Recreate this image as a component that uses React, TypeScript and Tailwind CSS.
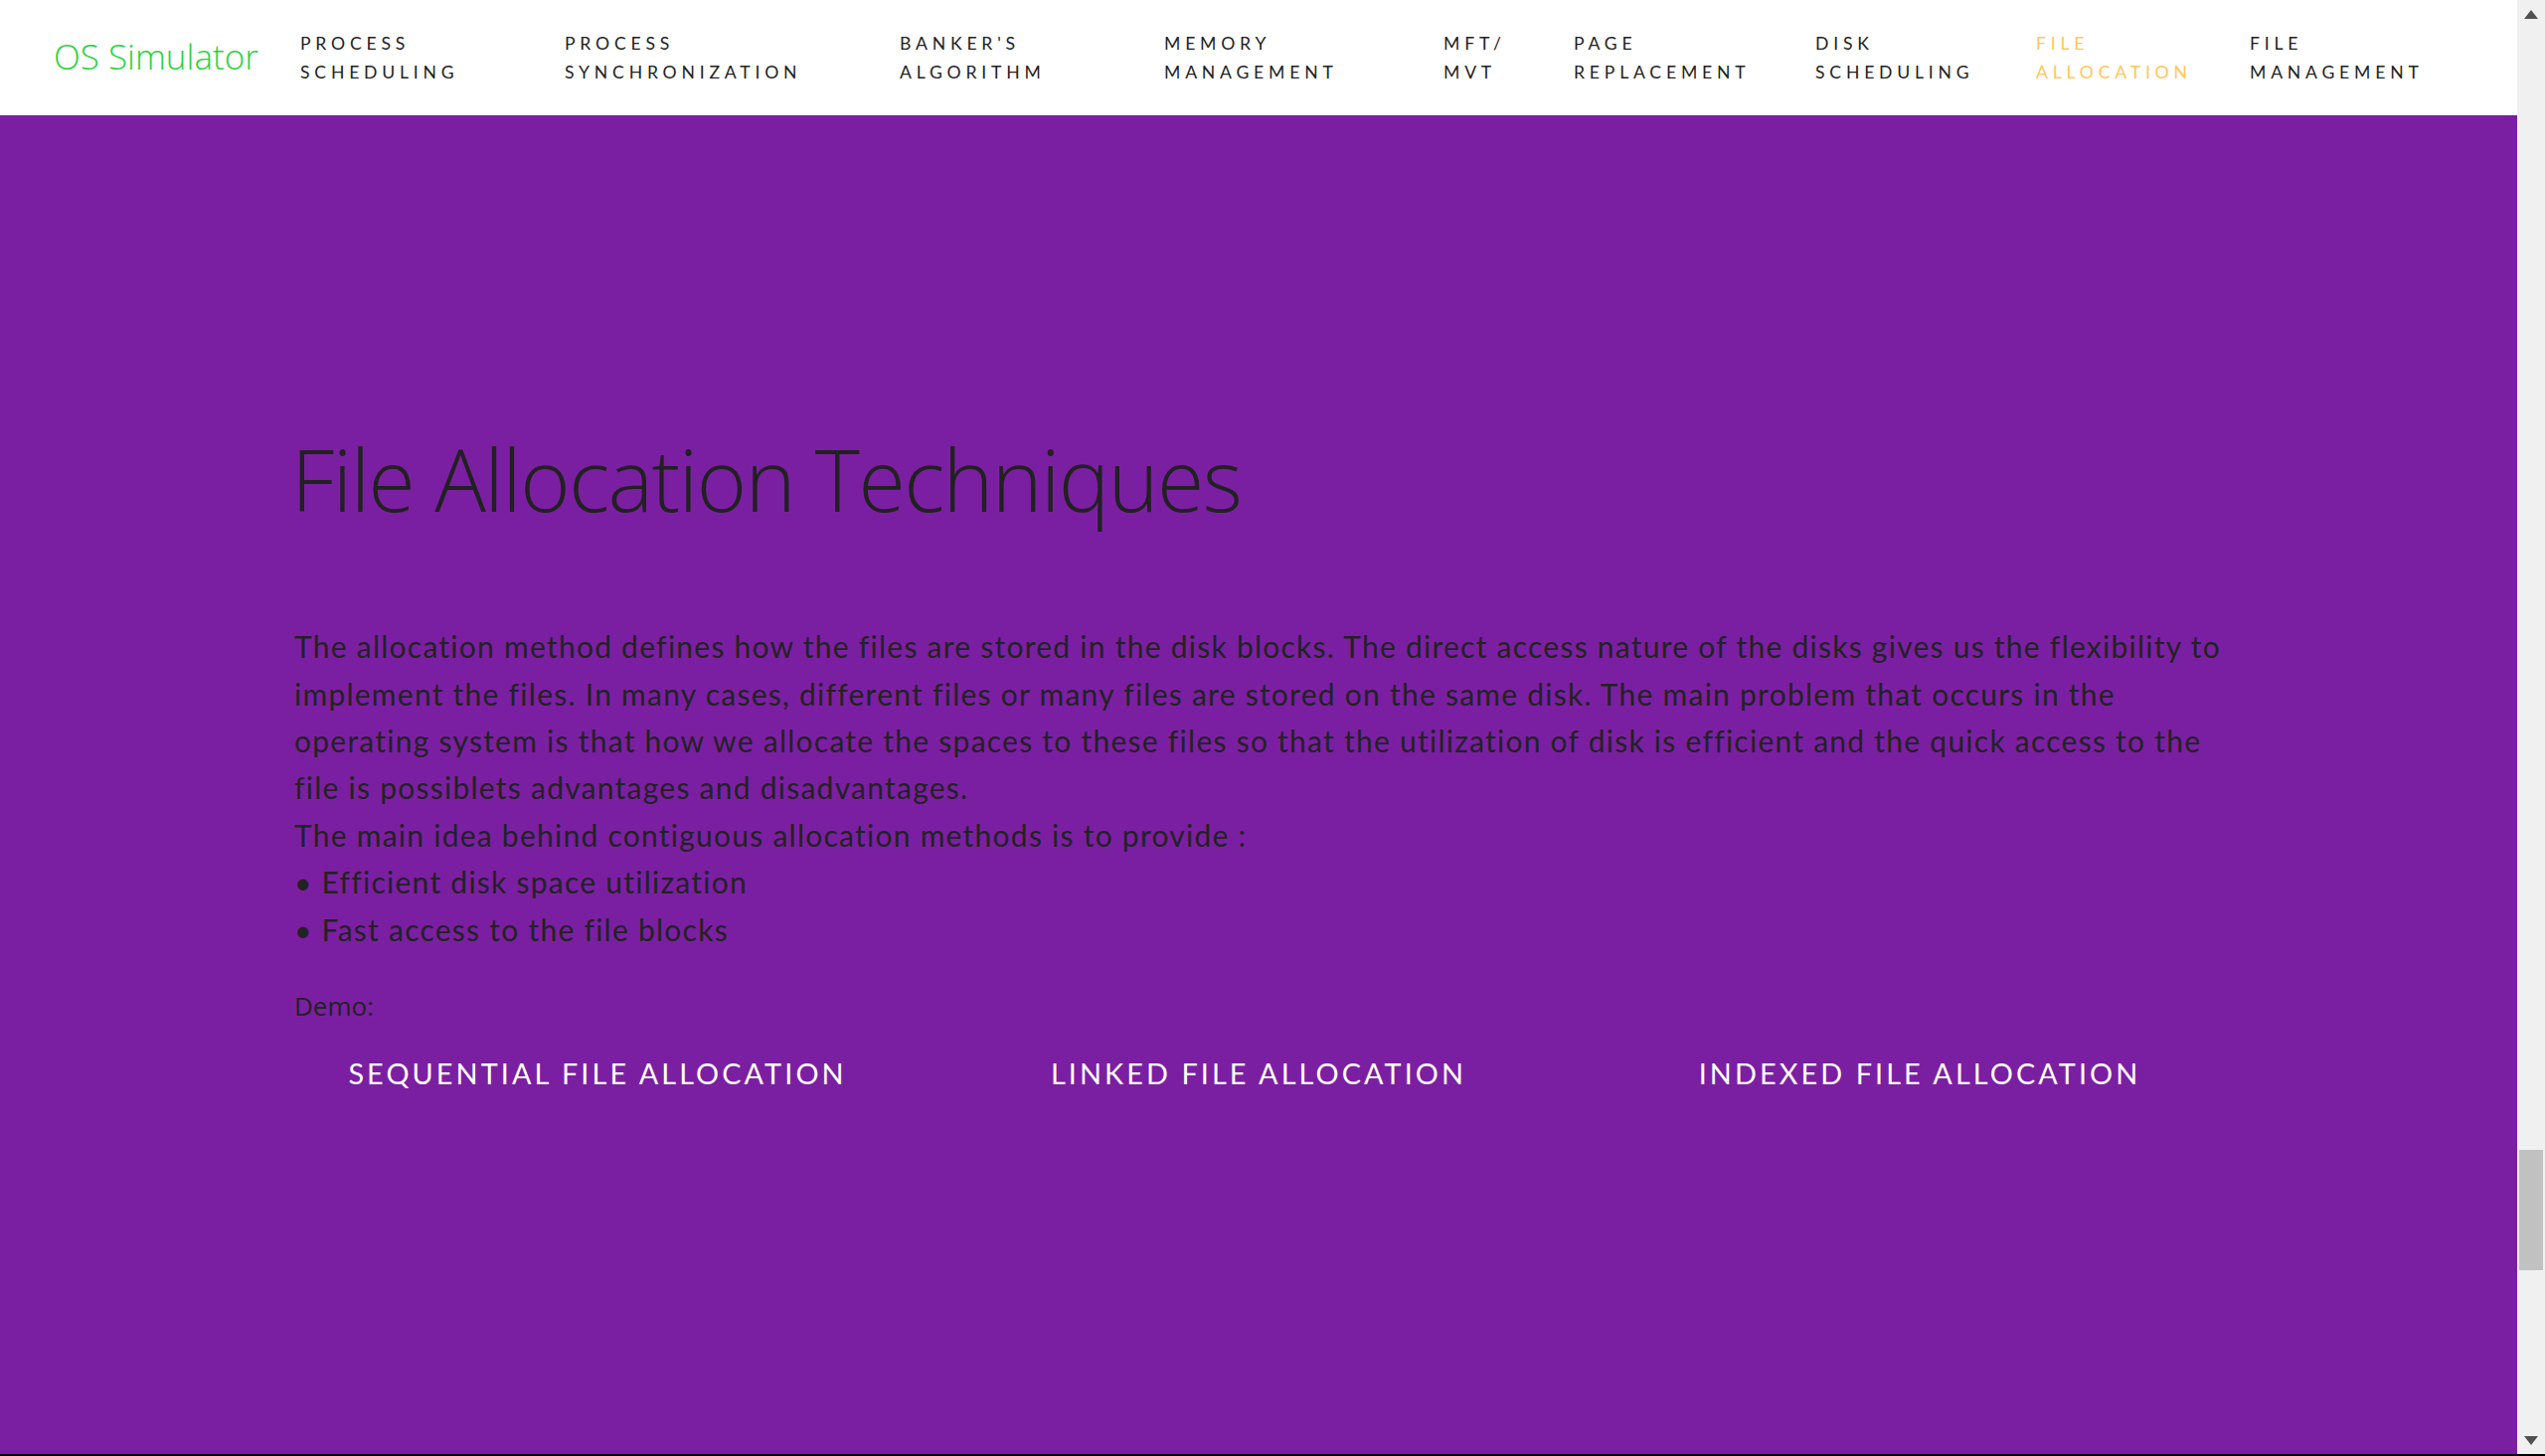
import React from "react";

const navItems: { l1: string; l2: string; w: string; active?: boolean }[] = [
  { l1: "PROCESS", l2: "SCHEDULING", w: "w-[266px]" },
  { l1: "PROCESS", l2: "SYNCHRONIZATION", w: "w-[337px]" },
  { l1: "BANKER'S", l2: "ALGORITHM", w: "w-[266px]" },
  { l1: "MEMORY", l2: "MANAGEMENT", w: "w-[281px]" },
  { l1: "MFT/", l2: "MVT", w: "w-[131px]" },
  { l1: "PAGE", l2: "REPLACEMENT", w: "w-[243px]" },
  { l1: "DISK", l2: "SCHEDULING", w: "w-[222px]" },
  { l1: "FILE", l2: "ALLOCATION", w: "w-[215px]", active: true },
  { l1: "FILE", l2: "MANAGEMENT", w: "w-[220px]" },
];

const paraLines = [
  "The allocation method defines how the files are stored in the disk blocks. The direct access nature of the disks gives us the flexibility to",
  "implement the files. In many cases, different files or many files are stored on the same disk. The main problem that occurs in the",
  "operating system is that how we allocate the spaces to these files so that the utilization of disk is efficient and the quick access to the",
  "file is possiblets advantages and disadvantages.",
  "The main idea behind contiguous allocation methods is to provide :",
  "\u2022 Efficient disk space utilization",
  "\u2022 Fast access to the file blocks",
];

export default function App() {
  return (
    <div className="h-[1465px] w-[2560px] flex flex-col overflow-hidden">
      <div className="flex-1 flex min-h-0">
        <div className="flex-1 flex flex-col min-w-0">
          {/* Navbar */}
          <nav className="h-[116px] bg-white flex items-center pl-[54px] shrink-0">
            <div
              className="w-[248px] text-[35px] text-[#2bd13e] font-light -mt-[2px]"
              style={{ fontFamily: '"Open Sans", sans-serif' }}
            >
              OS Simulator
            </div>
            {navItems.map((it, i) => (
              <div
                key={i}
                className={`${it.w} text-[17.6px] leading-[29px] tracking-[4.8px] ${
                  it.active ? "text-[#ffc85a]" : "text-[#222]"
                }`}
                style={{ fontFamily: "Lato, sans-serif" }}
              >
                <div>{it.l1}</div>
                <div>{it.l2}</div>
              </div>
            ))}
          </nav>
          {/* Content */}
          <main className="flex-1 bg-[#7b1fa2] pt-[314px]">
            <div className="w-[1940px] mx-auto">
              <h1
                className="text-[86px] leading-[1.2] font-light text-[#212121] tracking-[-1.5px] -ml-[3px]"
                style={{ fontFamily: '"Open Sans", sans-serif' }}
              >
                File Allocation Techniques
              </h1>
              <div
                className="mt-[94px] text-[30px] leading-[47.4px] tracking-[1.25px] text-[#222] whitespace-nowrap"
                style={{ fontFamily: "Lato, sans-serif" }}
              >
                {paraLines.map((l, i) => (
                  <div key={i}>{l}</div>
                ))}
              </div>
              <div
                className="mt-[33px] text-[26px] leading-[40px] text-[#222]"
                style={{ fontFamily: '"Open Sans", sans-serif' }}
              >
                Demo:
              </div>
            </div>
            <div className="flex justify-center mt-[28px]">
              {["SEQUENTIAL FILE ALLOCATION", "LINKED FILE ALLOCATION", "INDEXED FILE ALLOCATION"].map(
                (t) => (
                  <div
                    key={t}
                    className="w-[665px] text-center text-white text-[28.8px] leading-[40px] tracking-[3.1px]"
                    style={{ fontFamily: "Lato, sans-serif" }}
                  >
                    {t}
                  </div>
                )
              )}
            </div>
          </main>
        </div>
        {/* Window scrollbar */}
        <div className="w-[28px] bg-[#f0f0f0] flex flex-col items-center shrink-0">
          <div className="h-[28px] flex items-center justify-center">
            <svg width="14" height="9" viewBox="0 0 14 9">
              <polygon points="7,0 14,9 0,9" fill="#505050" />
            </svg>
          </div>
          <div className="flex-1 w-full flex flex-col pt-[1129px] px-[2px]">
            <div className="h-[121px] w-full bg-[#c1c1c1]" />
          </div>
          <div className="h-[28px] flex items-center justify-center">
            <svg width="14" height="9" viewBox="0 0 14 9">
              <polygon points="0,0 14,0 7,9" fill="#505050" />
            </svg>
          </div>
        </div>
      </div>
      <div className="h-[2px] bg-black shrink-0" />
    </div>
  );
}
